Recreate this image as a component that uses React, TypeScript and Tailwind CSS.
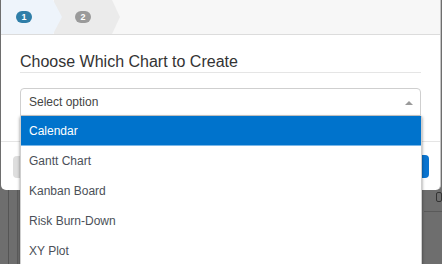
import React from "react";

const options = ["Calendar", "Gantt Chart", "Kanban Board", "Risk Burn-Down", "XY Plot"];

export default function App() {
  const [selected] = React.useState(0);

  return (
    <div className="relative w-[442px] h-[264px] overflow-hidden bg-[#6e6e6e] font-['Liberation_Sans',Arial,sans-serif]">
      {/* page behind the backdrop */}
      <div className="absolute left-[8px] top-[190px] w-[1px] h-[74px] bg-[#555]" />
      <div className="absolute left-[17px] top-[190px] w-[1px] h-[74px] bg-[#5c5c5c]" />
      <div className="absolute left-[424px] top-[211px] w-[18px] h-[1px] bg-[#5a5a5a]" />
      <div className="absolute left-[436px] top-[192px] w-[6px] h-[10px] border border-[#333] rounded-[2px]" />

      {/* modal */}
      <div className="absolute left-[1px] top-0 w-[440px] h-[190px] bg-white rounded-b-[5px] border-r border-[#c4c4c4] flex flex-col">
        <div className="h-[35px] bg-[#f7f7f7] border-b border-[#dcdcdc] flex shrink-0">
          <div className="relative z-10 w-[61px] h-full bg-[#eef4fb] flex items-center pl-[15px] [clip-path:polygon(0_0,calc(100%-9px)_0,100%_50%,calc(100%-9px)_100%,0_100%)]">
            <span className="w-[16px] h-[12px] rounded-full bg-[#2f7ea8] text-white text-[9px] font-bold leading-none flex items-center justify-center">
              1
            </span>
          </div>
          <div className="-ml-[8px] w-[66px] h-full bg-[#ebebeb] flex items-center pl-[21px] [clip-path:polygon(0_0,calc(100%-8px)_0,100%_50%,calc(100%-8px)_100%,0_100%)]">
            <span className="w-[16px] h-[12px] rounded-full bg-[#9a9a9a] text-white text-[9px] font-bold leading-none flex items-center justify-center">
              2
            </span>
          </div>
        </div>

        <div className="px-[19px] pb-[25px]">
          <h2 className="pt-[17px] text-[16px] leading-[20px] text-[#333] border-b border-[#e5e5e5]">
            Choose Which Chart to Create
          </h2>
          <div className="relative mt-[15px]">
            <div className="relative h-[28px] border border-[#cfcfcf] rounded-t-[4px] flex items-center pl-[8px] text-[12px] text-[#444]">
              Select option
              <span className="absolute right-[7px] top-[12px] w-0 h-0 border-x-[4px] border-x-transparent border-b-[4px] border-b-[#9a9a9a]" />
            </div>
            <ul className="absolute left-0 top-full z-20 w-[402px] pb-[20px] bg-white border border-t-0 border-[#cfcfcf] shadow-[0_1px_3px_rgba(0,0,0,0.45)]">
              {options.map((o, i) => (
                <li
                  key={o}
                  className={
                    i === selected
                      ? "h-[30px] flex items-center pl-[8px] text-[12px] text-white bg-[#0073cc] shadow-[inset_0_-1px_0_#7ab7e8]"
                      : "h-[30px] flex items-center pl-[8px] text-[12px] text-[#4b5058]"
                  }
                >
                  {o}
                </li>
              ))}
            </ul>
          </div>
        </div>

        <div className="border-t border-[#e5e5e5] flex justify-between pl-[12px] pr-[11px] pt-[14px]">
          <div className="w-[60px] h-[22px] rounded-[4px] bg-[#dedede]" />
          <div className="w-[70px] h-[23px] -mt-[1px] rounded-[4px] bg-[#0a74cf]" />
        </div>
      </div>
    </div>
  );
}
